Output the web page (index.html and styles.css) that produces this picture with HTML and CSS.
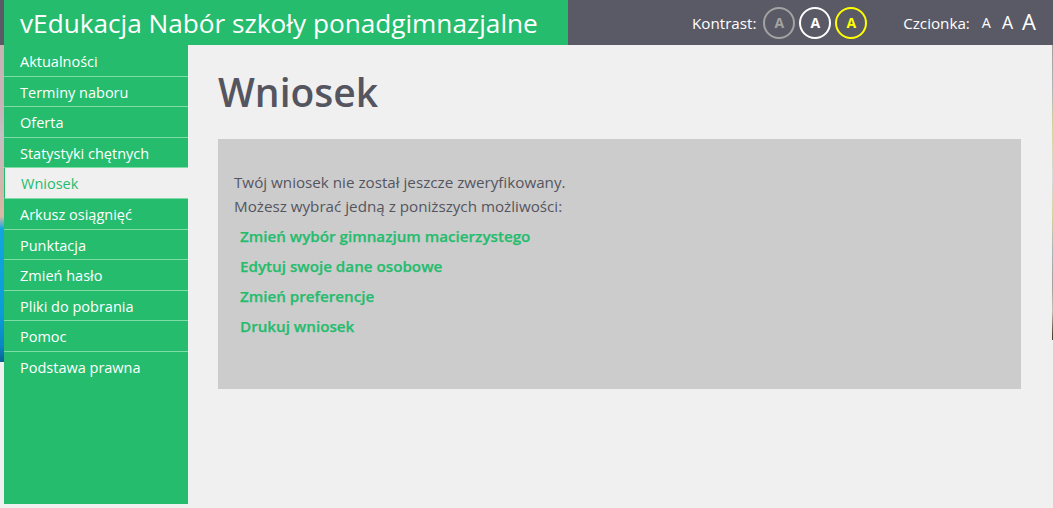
FILE: index.html
```html
<!DOCTYPE html>
<html lang="pl">
<head>
<meta charset="utf-8">
<title>vEdukacja Nabór szkoły ponadgimnazjalne</title>
<link rel="stylesheet" href="styles.css">
</head>
<body>
<header class="topbar">
  <div class="brand">vEdukacja Nabór szkoły ponadgimnazjalne</div>
  <div class="tools">
    <div class="contrast">
      <span class="tool-label">Kontrast:</span>
      <a class="circle circle-grey">A</a>
      <a class="circle circle-white">A</a>
      <a class="circle circle-yellow">A</a>
    </div>
    <div class="fontsize">
      <span class="tool-label">Czcionka:</span>
      <a class="fs fs-s">A</a>
      <a class="fs fs-m">A</a>
      <a class="fs fs-l">A</a>
    </div>
  </div>
</header>
<div class="layout">
  <nav class="sidebar">
    <a class="nav-item">Aktualności</a>
    <a class="nav-item">Terminy naboru</a>
    <a class="nav-item">Oferta</a>
    <a class="nav-item">Statystyki chętnych</a>
    <a class="nav-item active">Wniosek</a>
    <a class="nav-item">Arkusz osiągnięć</a>
    <a class="nav-item">Punktacja</a>
    <a class="nav-item">Zmień hasło</a>
    <a class="nav-item">Pliki do pobrania</a>
    <a class="nav-item">Pomoc</a>
    <a class="nav-item last">Podstawa prawna</a>
  </nav>
  <main class="content">
    <h1 class="title">Wniosek</h1>
    <section class="panel">
      <p class="line">Twój wniosek nie został jeszcze zweryfikowany.</p>
      <p class="line">Możesz wybrać jedną z poniższych możliwości:</p>
      <ul class="actions">
        <li><a>Zmień wybór gimnazjum macierzystego</a></li>
        <li><a>Edytuj swoje dane osobowe</a></li>
        <li><a>Zmień preferencje</a></li>
        <li><a>Drukuj wniosek</a></li>
      </ul>
    </section>
  </main>
</div>
</body>
</html>
```
FILE: styles.css
```css
* { box-sizing: border-box; }
html, body { height: 100%; }
body {
  margin: 0;
  overflow: hidden;
  font-family: "Open Sans", sans-serif;
  background-color: #f0f0f0;
  background-image:
    linear-gradient(to bottom, #c9b3b3 0, #c8b4b8 20%, #c3c0c4 28%, #d3b5ac 45%, #dcb9a5 54%, #12a5e0 58%, #0a9cd8 85%, #0a86c4 95%, #0a5f90 100%),
    linear-gradient(to bottom, #a89a9a 0, #aeb6ba 15%, #d8d49a 28%, #d8dcdc 45%, #d6d4a0 58%, #a9b3b8 70%, #a89c9c 82%, #c8c0b8 90%, #5a4436 98%, #4a3a30 100%);
  background-repeat: no-repeat;
  background-size: 4px 317px, 1px 295px;
  background-position: 0 45px, 100% 45px;
}
.topbar {
  display: flex;
  height: 45px;
  padding-left: 4px;
  background: #5a5a66;
  color: #fff;
}
.brand {
  width: 564px;
  padding-left: 16px;
  background: #25bc6e;
  font-size: 26.2px;
  line-height: 47px;
  white-space: nowrap;
}
.tools {
  display: flex;
  align-items: center;
  flex: 1;
  padding: 0 17px 0 124px;
  justify-content: space-between;
}
.contrast, .fontsize { display: flex; align-items: center; }
.tool-label { font-size: 15.2px; }
.contrast .tool-label { margin-right: 7px; }
.fontsize .tool-label { margin-right: 12px; }
.circle {
  display: flex;
  align-items: center;
  justify-content: center;
  width: 32px;
  height: 32px;
  margin-right: 4px;
  border: 2px solid;
  border-radius: 50%;
  font-size: 14px;
  font-weight: 700;
}
.circle-grey { color: #a3a3a3; border-color: #a3a3a3; }
.circle-white { color: #fff; border-color: #fff; }
.circle-yellow { color: #ffff00; border-color: #ffff00; margin-right: 0; }
.fs { line-height: 1; }
.fs-s { font-size: 14.4px; margin-right: 11px; position: relative; top: 1px; }
.fs-m { font-size: 17.6px; margin-right: 9px; }
.fs-l { font-size: 22px; position: relative; top: -2px; }
.layout {
  display: flex;
  height: 459px;
  padding-left: 4px;
}
.sidebar {
  display: flex;
  flex-direction: column;
  width: 184px;
  flex: none;
  padding-top: 1px;
  background: #25bc6e;
  color: #fff;
}
.nav-item {
  display: block;
  height: 30.6px;
  padding-left: 16px;
  border-bottom: 1px solid #7fdca6;
  font-size: 14.5px;
  line-height: 32.4px;
  white-space: nowrap;
}
.nav-item.last { border-bottom: 0; }
.nav-item.active {
  padding-left: 16px;
  border-left: 1px solid #25bc6e;
  background: #f0f0f0;
  color: #25bc6e;
}
.content {
  flex: 1;
  padding: 0 32px 0 30px;
}
.title {
  margin: 0;
  padding-top: 19px;
  height: 94px;
  color: #555560;
  font-size: 39px;
  font-weight: 600;
  line-height: 56px;
}
.panel {
  height: 250px;
  padding: 31px 16px 0;
  background: #ccc;
  color: #555560;
  font-size: 15.2px;
}
.line {
  margin: 0;
  line-height: 24px;
}
.actions {
  margin: 3px 0 0;
  padding: 0 0 0 6px;
  list-style: none;
  color: #25bc6e;
  font-weight: 600;
  -webkit-text-stroke: 0.25px #25bc6e;
}
.actions li {
  height: 30px;
  line-height: 30px;
}
```
